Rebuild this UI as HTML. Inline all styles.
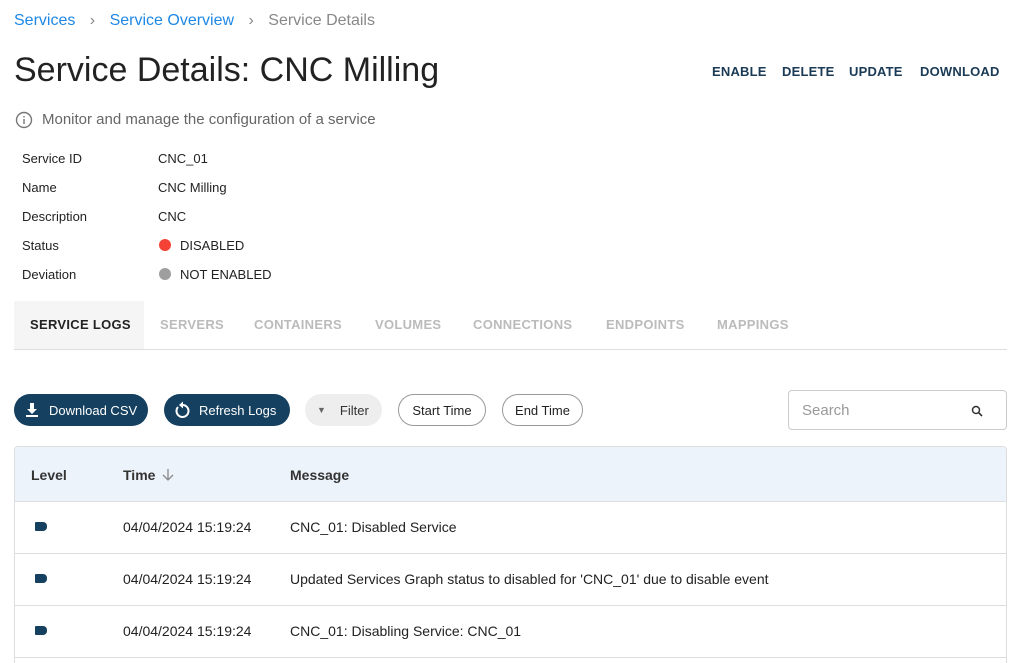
<!DOCTYPE html>
<html><head><meta charset="utf-8"><style>
*{box-sizing:border-box;margin:0;padding:0}
html,body{width:1021px;height:663px;overflow:hidden}
body{background:#fff;font-family:"Liberation Sans",sans-serif;color:#222;position:relative}
.a{position:absolute;white-space:nowrap}
.bc{top:12px;left:14px;font-size:16px;color:#1e88e5}
.title{top:51px;left:14px;font-size:34px;color:#222}
.act{top:64px;font-size:13px;font-weight:bold;color:#1a3a55;letter-spacing:.2px}
.sub{top:111px;left:42px;font-size:15px;color:#666}
.k{left:22px;font-size:13px;color:#222}
.v{left:158px;font-size:13px;color:#222}
.dot{width:12px;height:12px;border-radius:50%;display:inline-block;position:absolute;left:159px}
.tabs{top:301px;left:14px;width:993px;height:49px;border-bottom:1px solid #ddd}
.tab{top:317px;font-size:13px;color:#bbb;font-weight:bold;letter-spacing:.3px}
.btn{top:394px;height:32px;border-radius:16px;font-size:13px;display:flex;align-items:center}
.dk{background:#15405f;color:#fff}
.ol{border:1px solid #999;color:#222;justify-content:center}
.tbl{top:446px;left:14px;width:993px;height:230px;border:1px solid #ddd;border-radius:4px;overflow:hidden}
.hd{height:55px;background:#edf3fb;border-bottom:1px solid #ddd}
.row{position:absolute;left:0;width:993px;height:52px;border-bottom:1px solid #ddd;font-size:14px}
.row span{position:absolute;top:17px}
.tag{position:absolute;left:20px;top:20px;width:12px;height:9px;background:#15405f;border-radius:1px 4px 4px 1px}
</style></head><body>
<div class="a bc">Services <span style="color:#888;margin:0 10px">›</span> Service Overview <span style="color:#888;margin:0 10px">›</span> <span style="color:#888">Service Details</span></div>
<div class="a title">Service Details: CNC Milling</div>
<div class="a act" style="left:712px">ENABLE</div>
<div class="a act" style="left:782px">DELETE</div>
<div class="a act" style="left:849px">UPDATE</div>
<div class="a act" style="left:920px">DOWNLOAD</div>
<svg class="a" style="top:111px;left:15px" width="18" height="18" viewBox="0 0 18 18"><circle cx="9" cy="9" r="7.5" fill="none" stroke="#777" stroke-width="1.4"/><rect x="8.3" y="8" width="1.4" height="5" fill="#777"/><rect x="8.3" y="5" width="1.4" height="1.5" fill="#777"/></svg>
<div class="a sub">Monitor and manage the configuration of a service</div>
<div class="a k" style="top:151px">Service ID</div><div class="a v" style="top:151px">CNC_01</div>
<div class="a k" style="top:180px">Name</div><div class="a v" style="top:180px">CNC Milling</div>
<div class="a k" style="top:209px">Description</div><div class="a v" style="top:209px">CNC</div>
<div class="a k" style="top:238px">Status</div><span class="dot" style="top:239px;background:#f44336"></span><div class="a v" style="top:238px;left:180px">DISABLED</div>
<div class="a k" style="top:267px">Deviation</div><span class="dot" style="top:268px;background:#9e9e9e"></span><div class="a v" style="top:267px;left:180px">NOT ENABLED</div>
<div class="a tabs"></div>
<div class="a" style="top:301px;left:14px;width:130px;height:48px;background:#f5f5f5"></div>
<div class="a tab" style="left:30px;color:#222">SERVICE LOGS</div>
<div class="a tab" style="left:160px">SERVERS</div>
<div class="a tab" style="left:254px">CONTAINERS</div>
<div class="a tab" style="left:375px">VOLUMES</div>
<div class="a tab" style="left:473px">CONNECTIONS</div>
<div class="a tab" style="left:606px">ENDPOINTS</div>
<div class="a tab" style="left:717px">MAPPINGS</div>
<div class="a btn dk" style="left:14px;width:134px;padding-left:10px"><svg width="16" height="16" viewBox="0 0 16 16"><path d="M6 1h4v6h3l-5 5-5-5h3z" fill="#fff"/><rect x="2" y="13" width="12" height="2" fill="#fff"/></svg><span style="margin-left:9px">Download CSV</span></div>
<div class="a btn dk" style="left:164px;width:126px;padding-left:9px"><svg width="18" height="18" viewBox="0 0 18 18"><path d="M5 6a6 6 0 1 0 5-2" fill="none" stroke="#fff" stroke-width="2"/><path d="M10 0.5v7l-4-3.5z" fill="#fff"/></svg><span style="margin-left:8px">Refresh Logs</span></div>
<div class="a btn" style="left:305px;width:77px;background:#eee;color:#333;padding-left:12px"><span style="font-size:9px;color:#666">▼</span><span style="margin-left:14px">Filter</span></div>
<div class="a btn ol" style="left:398px;width:88px">Start Time</div>
<div class="a btn ol" style="left:502px;width:81px">End Time</div>
<div class="a" style="top:390px;left:788px;width:219px;height:40px;border:1px solid #ccc;border-radius:4px"><span style="position:absolute;left:13px;top:11px;font-size:15px;color:#999">Search</span><svg style="position:absolute;right:23px;top:14px" width="12" height="12" viewBox="0 0 12 12"><circle cx="5" cy="5" r="3.5" fill="none" stroke="#333" stroke-width="1.5"/><path d="M7.5 7.5L11 11" stroke="#333" stroke-width="1.6"/></svg></div>
<div class="a tbl">
<div class="hd" style="position:relative;font-size:14px;font-weight:bold;color:#333">
<span style="position:absolute;left:16px;top:20px">Level</span>
<span style="position:absolute;left:108px;top:20px">Time</span>
<svg style="position:absolute;left:146px;top:21px" width="14" height="14" viewBox="0 0 14 14"><path d="M7 1v11M2 7l5 5 5-5" fill="none" stroke="#888" stroke-width="1.3"/></svg>
<span style="position:absolute;left:275px;top:20px">Message</span></div>
<div class="row" style="top:55px"><div class="tag"></div><span style="left:108px">04/04/2024 15:19:24</span><span style="left:275px">CNC_01: Disabled Service</span></div>
<div class="row" style="top:107px"><div class="tag"></div><span style="left:108px">04/04/2024 15:19:24</span><span style="left:275px">Updated Services Graph status to disabled for 'CNC_01' due to disable event</span></div>
<div class="row" style="top:159px"><div class="tag"></div><span style="left:108px">04/04/2024 15:19:24</span><span style="left:275px">CNC_01: Disabling Service: CNC_01</span></div>
</div>
</body></html>
